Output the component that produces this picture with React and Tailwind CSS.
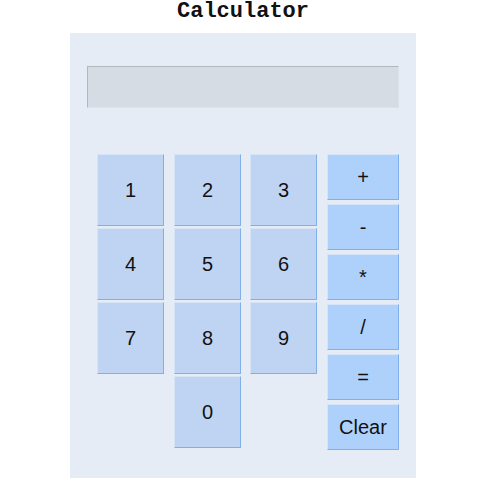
import React, { useState } from "react";

const digitCols = [["1", "4", "7"], ["2", "5", "8", "0"], ["3", "6", "9"]];
const ops = ["+", "-", "*", "/", "=", "Clear"];

const btnBase =
  "flex items-center justify-center border border-t-[#d6e4f7] border-l-[#d6e4f7] border-r-[#7fb0ec] border-b-[#7fb0ec] text-[20px] text-[#111] font-['Liberation_Sans',Arial,sans-serif]";

const App = () => {
  const [value, setValue] = useState("");

  const press = (key) => {
    if (key === "Clear") return setValue("");
    if (key === "=") {
      try {
        // eslint-disable-next-line no-new-func
        setValue(String(Function(`return (${value})`)()));
      } catch {
        setValue("Error");
      }
      return;
    }
    setValue((v) => v + key);
  };

  return (
    <div className="w-[478px] h-[478px] overflow-hidden bg-white">
      <h1 className="text-center pl-[8px] text-[22px] leading-[24px] font-bold text-[#111] font-['Liberation_Mono','Courier_New',monospace]">
        Calculator
      </h1>

      <div className="flex justify-center pl-[8px] mt-[9px]">
        <div className="w-[346px] bg-[#e5ecf6] pt-[33px] px-[17px] pb-[40px]">
          {/* display */}
          <input
            readOnly
            value={value}
            className="block w-full h-[42px] bg-[#d5dce4] border border-t-[#b3b8be] border-l-[#b3b8be] border-r-[#dde2e8] border-b-[#dde2e8] px-2 text-right text-[20px] font-['Liberation_Sans',Arial,sans-serif] outline-none"
          />

          {/* keypad */}
          <div className="flex items-start pl-[10px] mt-[46px]">
            {digitCols.map((col, i) => (
              <div
                key={i}
                className={`flex flex-col gap-[2px] w-[67px] ${i === 1 ? "mx-[10px]" : ""} ${i === 2 ? "mr-[10px] ml-[-1px]" : ""}`}
              >
                {col.map((d) => (
                  <button
                    key={d}
                    onClick={() => press(d)}
                    className={`${btnBase} h-[72px] bg-[#bed4f2]`}
                  >
                    {d}
                  </button>
                ))}
              </div>
            ))}

            <div className="flex flex-col gap-[4px] w-[72px]">
              {ops.map((o) => (
                <button
                  key={o}
                  onClick={() => press(o)}
                  className={`${btnBase} h-[46px] bg-[#aed1fc]`}
                >
                  {o}
                </button>
              ))}
            </div>
          </div>
        </div>
      </div>
    </div>
  );
};

export default App;
